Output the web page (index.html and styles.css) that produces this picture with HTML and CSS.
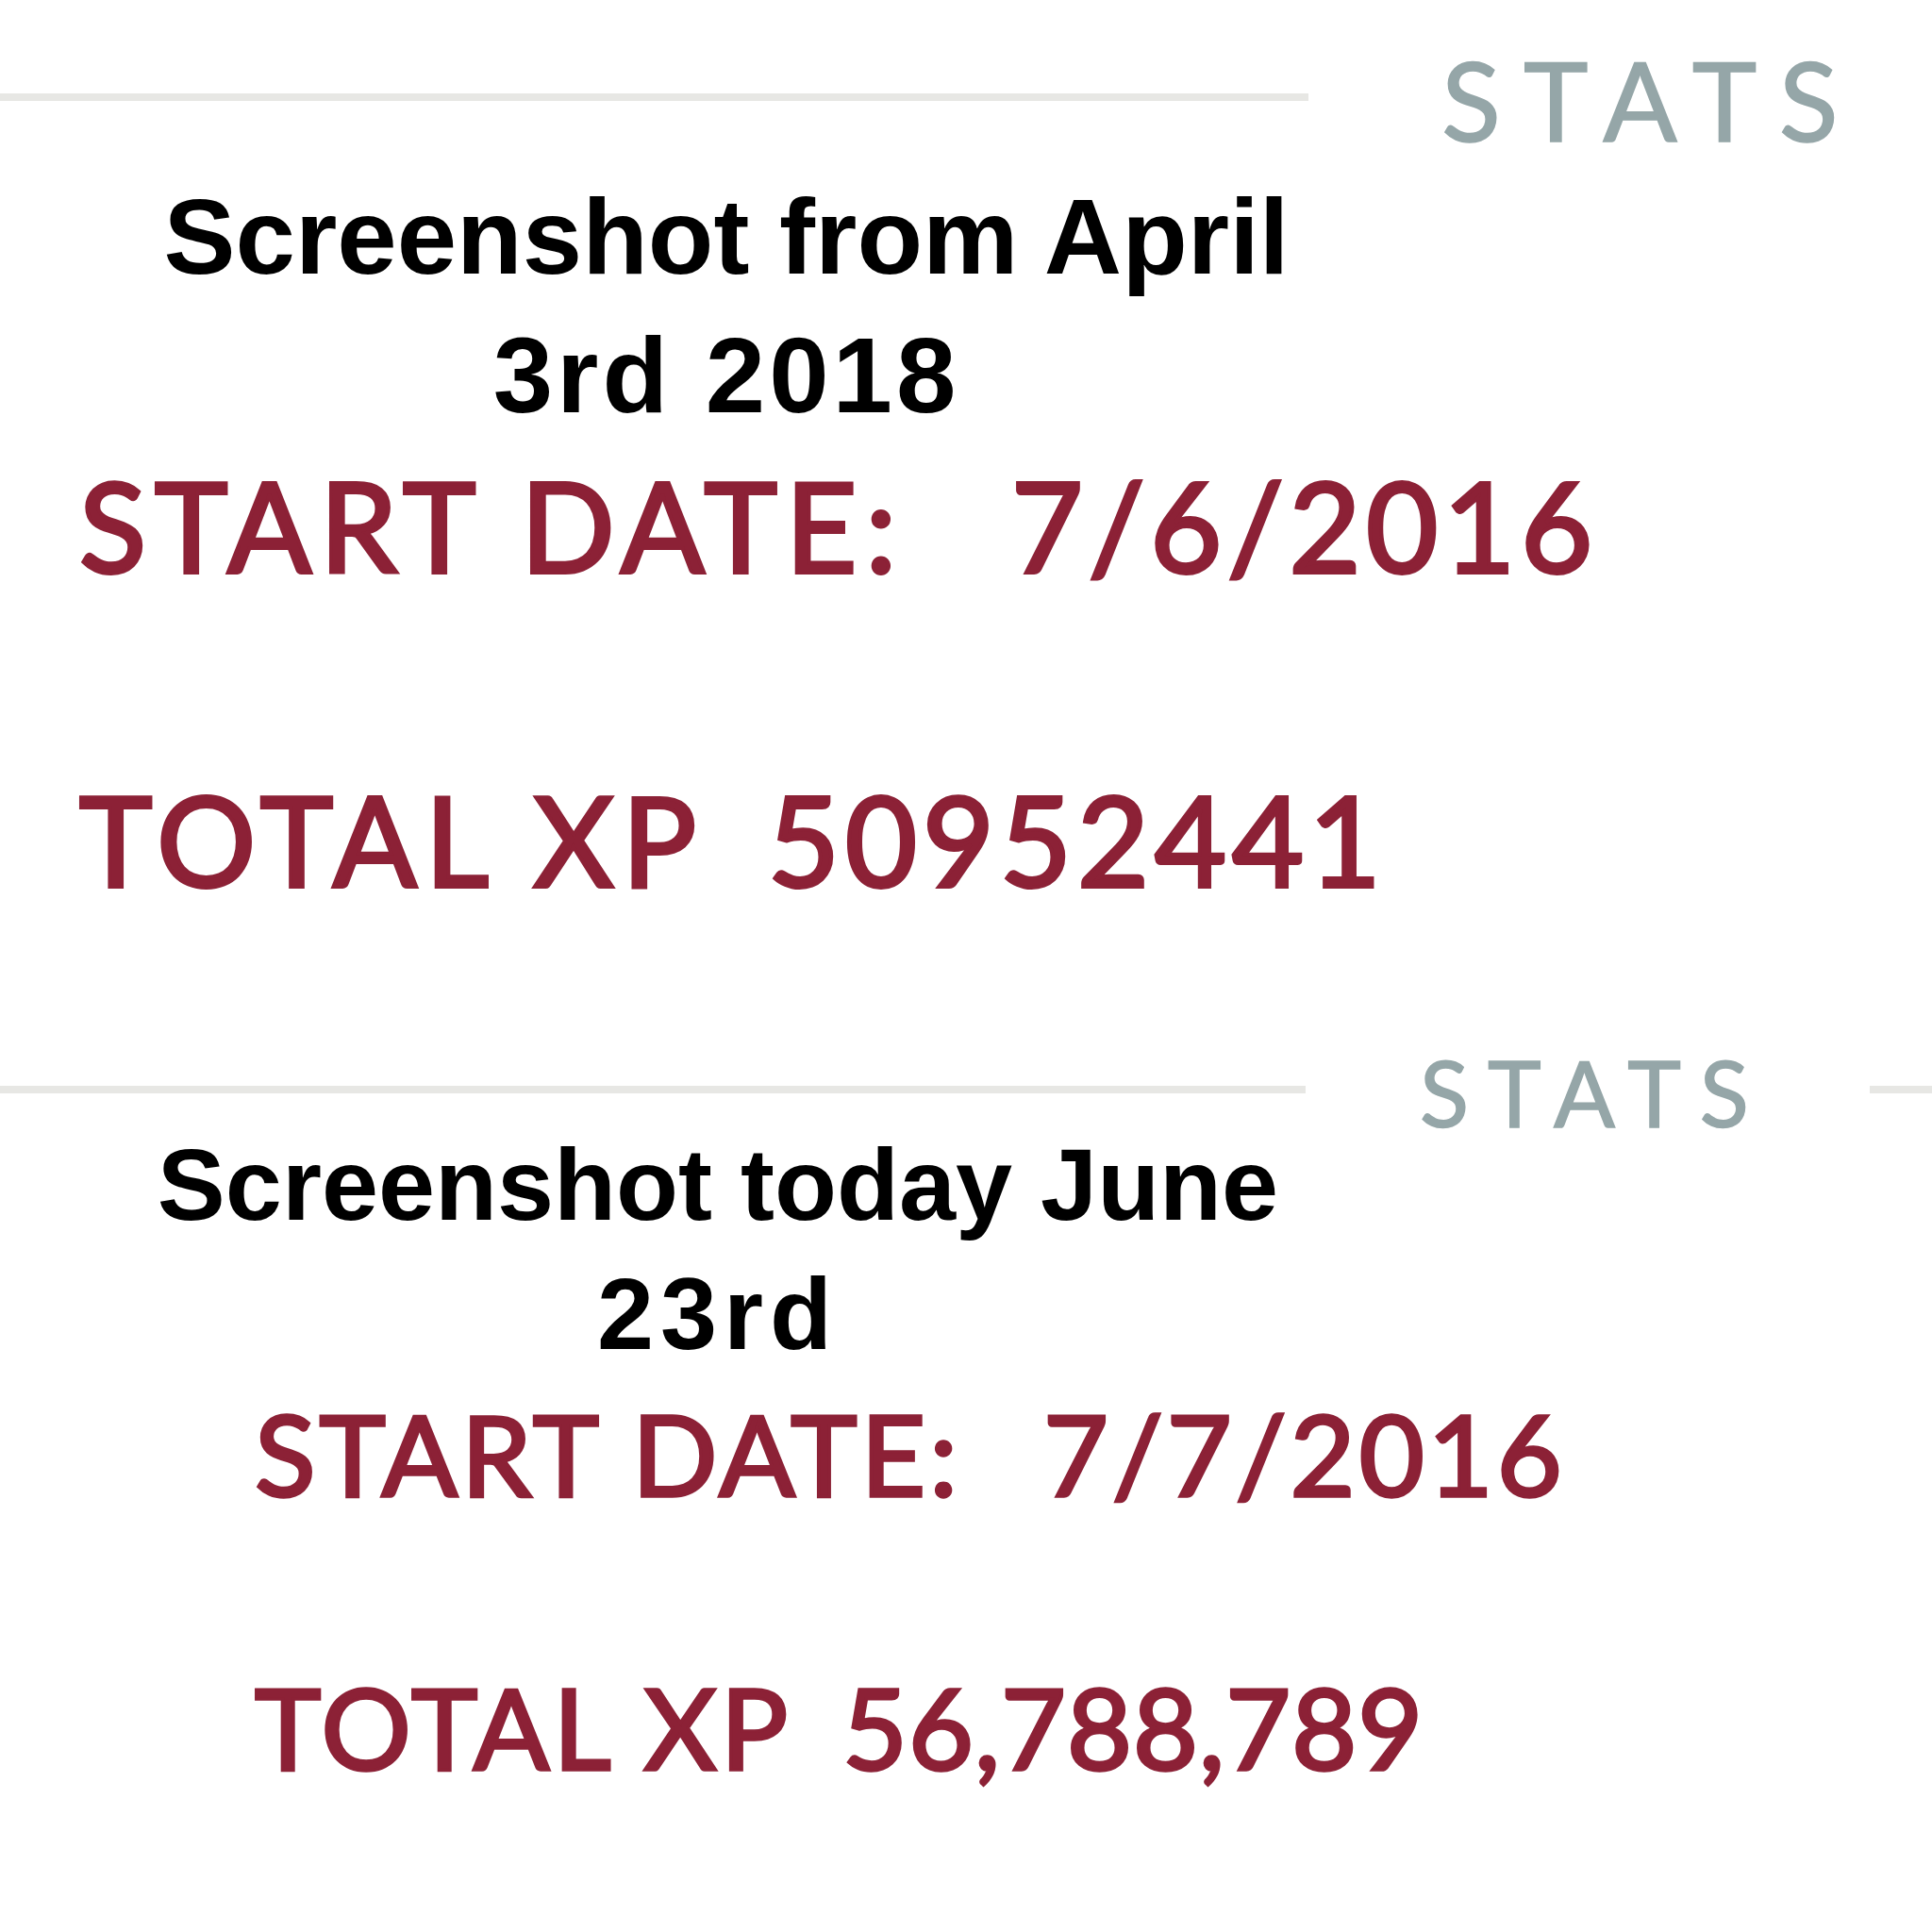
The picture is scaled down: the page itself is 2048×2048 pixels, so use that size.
FILE: index.html
```html
<!DOCTYPE html>
<html lang="en">
<head>
<meta charset="utf-8">
<title>Stats comparison</title>
<link rel="stylesheet" href="styles.css">
</head>
<body>
<main class="page">
  <section class="panel panel-old">
    <header class="stats-head">
      <span class="rule rule-left"></span>
      <h2 class="stats-title">STATS</h2>
    </header>
    <p class="note">Screenshot from April<br><span class="note-date">3rd 2018</span></p>
    <div class="stat stat-date"><span class="label">START DATE:</span><span class="value">7/6/2016</span></div>
    <div class="stat stat-xp"><span class="label">TOTAL XP</span><span class="value">50952441</span></div>
  </section>
  <section class="panel panel-new">
    <header class="stats-head">
      <span class="rule rule-left"></span>
      <h2 class="stats-title">STATS</h2>
      <span class="rule rule-right"></span>
    </header>
    <p class="note">Screenshot today June<br><span class="note-date">23rd</span></p>
    <div class="stat stat-date"><span class="label">START DATE:</span><span class="value">7/7/2016</span></div>
    <div class="stat stat-xp"><span class="label">TOTAL XP</span><span class="value">56,788,789</span></div>
  </section>
</main>
</body>
</html>
```
FILE: styles.css
```css
html, body {
  margin: 0;
  padding: 0;
  background: #ffffff;
}

.page {
  width: 2048px;
  height: 2048px;
  overflow: hidden;
  font-family: Lato, "Noto Sans", sans-serif;
}

.panel {
  display: flex;
  flex-direction: column;
}

/* header row with rule + STATS */
.stats-head {
  display: flex;
  align-items: center;
  margin: 0;
}

.rule {
  display: block;
  height: 8px;
  background: #e7e7e4;
  margin-bottom: 6px;
}

.stats-title {
  margin: 0;
  font-family: Lato, sans-serif;
  font-weight: 400;
  color: #95a6a8;
  line-height: 1;
  -webkit-text-stroke: 1.5px #95a6a8;
}

/* annotation text */
.note {
  margin: 0;
  font-family: "Liberation Sans", Arial, sans-serif;
  font-weight: 700;
  color: #000000;
  text-align: center;
}

/* stat rows */
.stat {
  display: flex;
  color: #8c2136;
  font-family: Lato, sans-serif;
  font-weight: 400;
  line-height: 1;
  white-space: nowrap;
  -webkit-text-stroke: 4px #8c2136;
}

.stat .label {
  flex: none;
}

/* ---------- first panel ---------- */
.panel-old .stats-head {
  margin-top: 49px;
  height: 114px;
}
.panel-old .rule-left {
  width: 1387px;
}
.panel-old .stats-title {
  margin-left: 141px;
  font-size: 116px;
  letter-spacing: 24px;
}
.panel-old .note {
  width: 1540px;
  margin-top: 14px;
  font-size: 114px;
  line-height: 147px;
}
.panel-old .note-date {
  letter-spacing: 4px;
}
.panel-old .stat {
  padding-left: 84px;
  font-size: 131px;
}
.panel-old .stat .label {
  letter-spacing: 9px;
}
.panel-old .stat .value {
  letter-spacing: 6px;
}
.panel-old .stat-date {
  margin-top: 20px;
}
.panel-old .stat-date .label {
  width: 988px;
}
.panel-old .stat-xp {
  margin-top: 202px;
}
.panel-old .stat-xp .label {
  width: 730px;
}

/* ---------- second panel ---------- */
.panel-new .stats-head {
  margin-top: 155px;
  height: 96px;
}
.panel-new .rule-left {
  width: 1384px;
}
.panel-new .stats-title {
  margin-left: 121px;
  font-size: 96px;
  letter-spacing: 20px;
}
.panel-new .rule-right {
  flex: 1;
  margin-left: 108px;
}
.panel-new .note {
  width: 1522px;
  margin-top: -19px;
  font-size: 108px;
  line-height: 137px;
}
.panel-new .note-date {
  letter-spacing: 7px;
}
.panel-new .stat {
  padding-left: 270px;
  font-size: 119px;
  -webkit-text-stroke: 3.5px #8c2136;
}
.panel-new .stat .label {
  letter-spacing: 4px;
}
.panel-new .stat-date .value {
  letter-spacing: 4px;
}
.panel-new .stat-xp .value {
  letter-spacing: 1px;
}
.panel-new .stat-date {
  margin-top: 20px;
}
.panel-new .stat-date .label {
  width: 836px;
}
.panel-new .stat-xp {
  margin-top: 171px;
}
.panel-new .stat-xp .label {
  width: 623px;
}
```
